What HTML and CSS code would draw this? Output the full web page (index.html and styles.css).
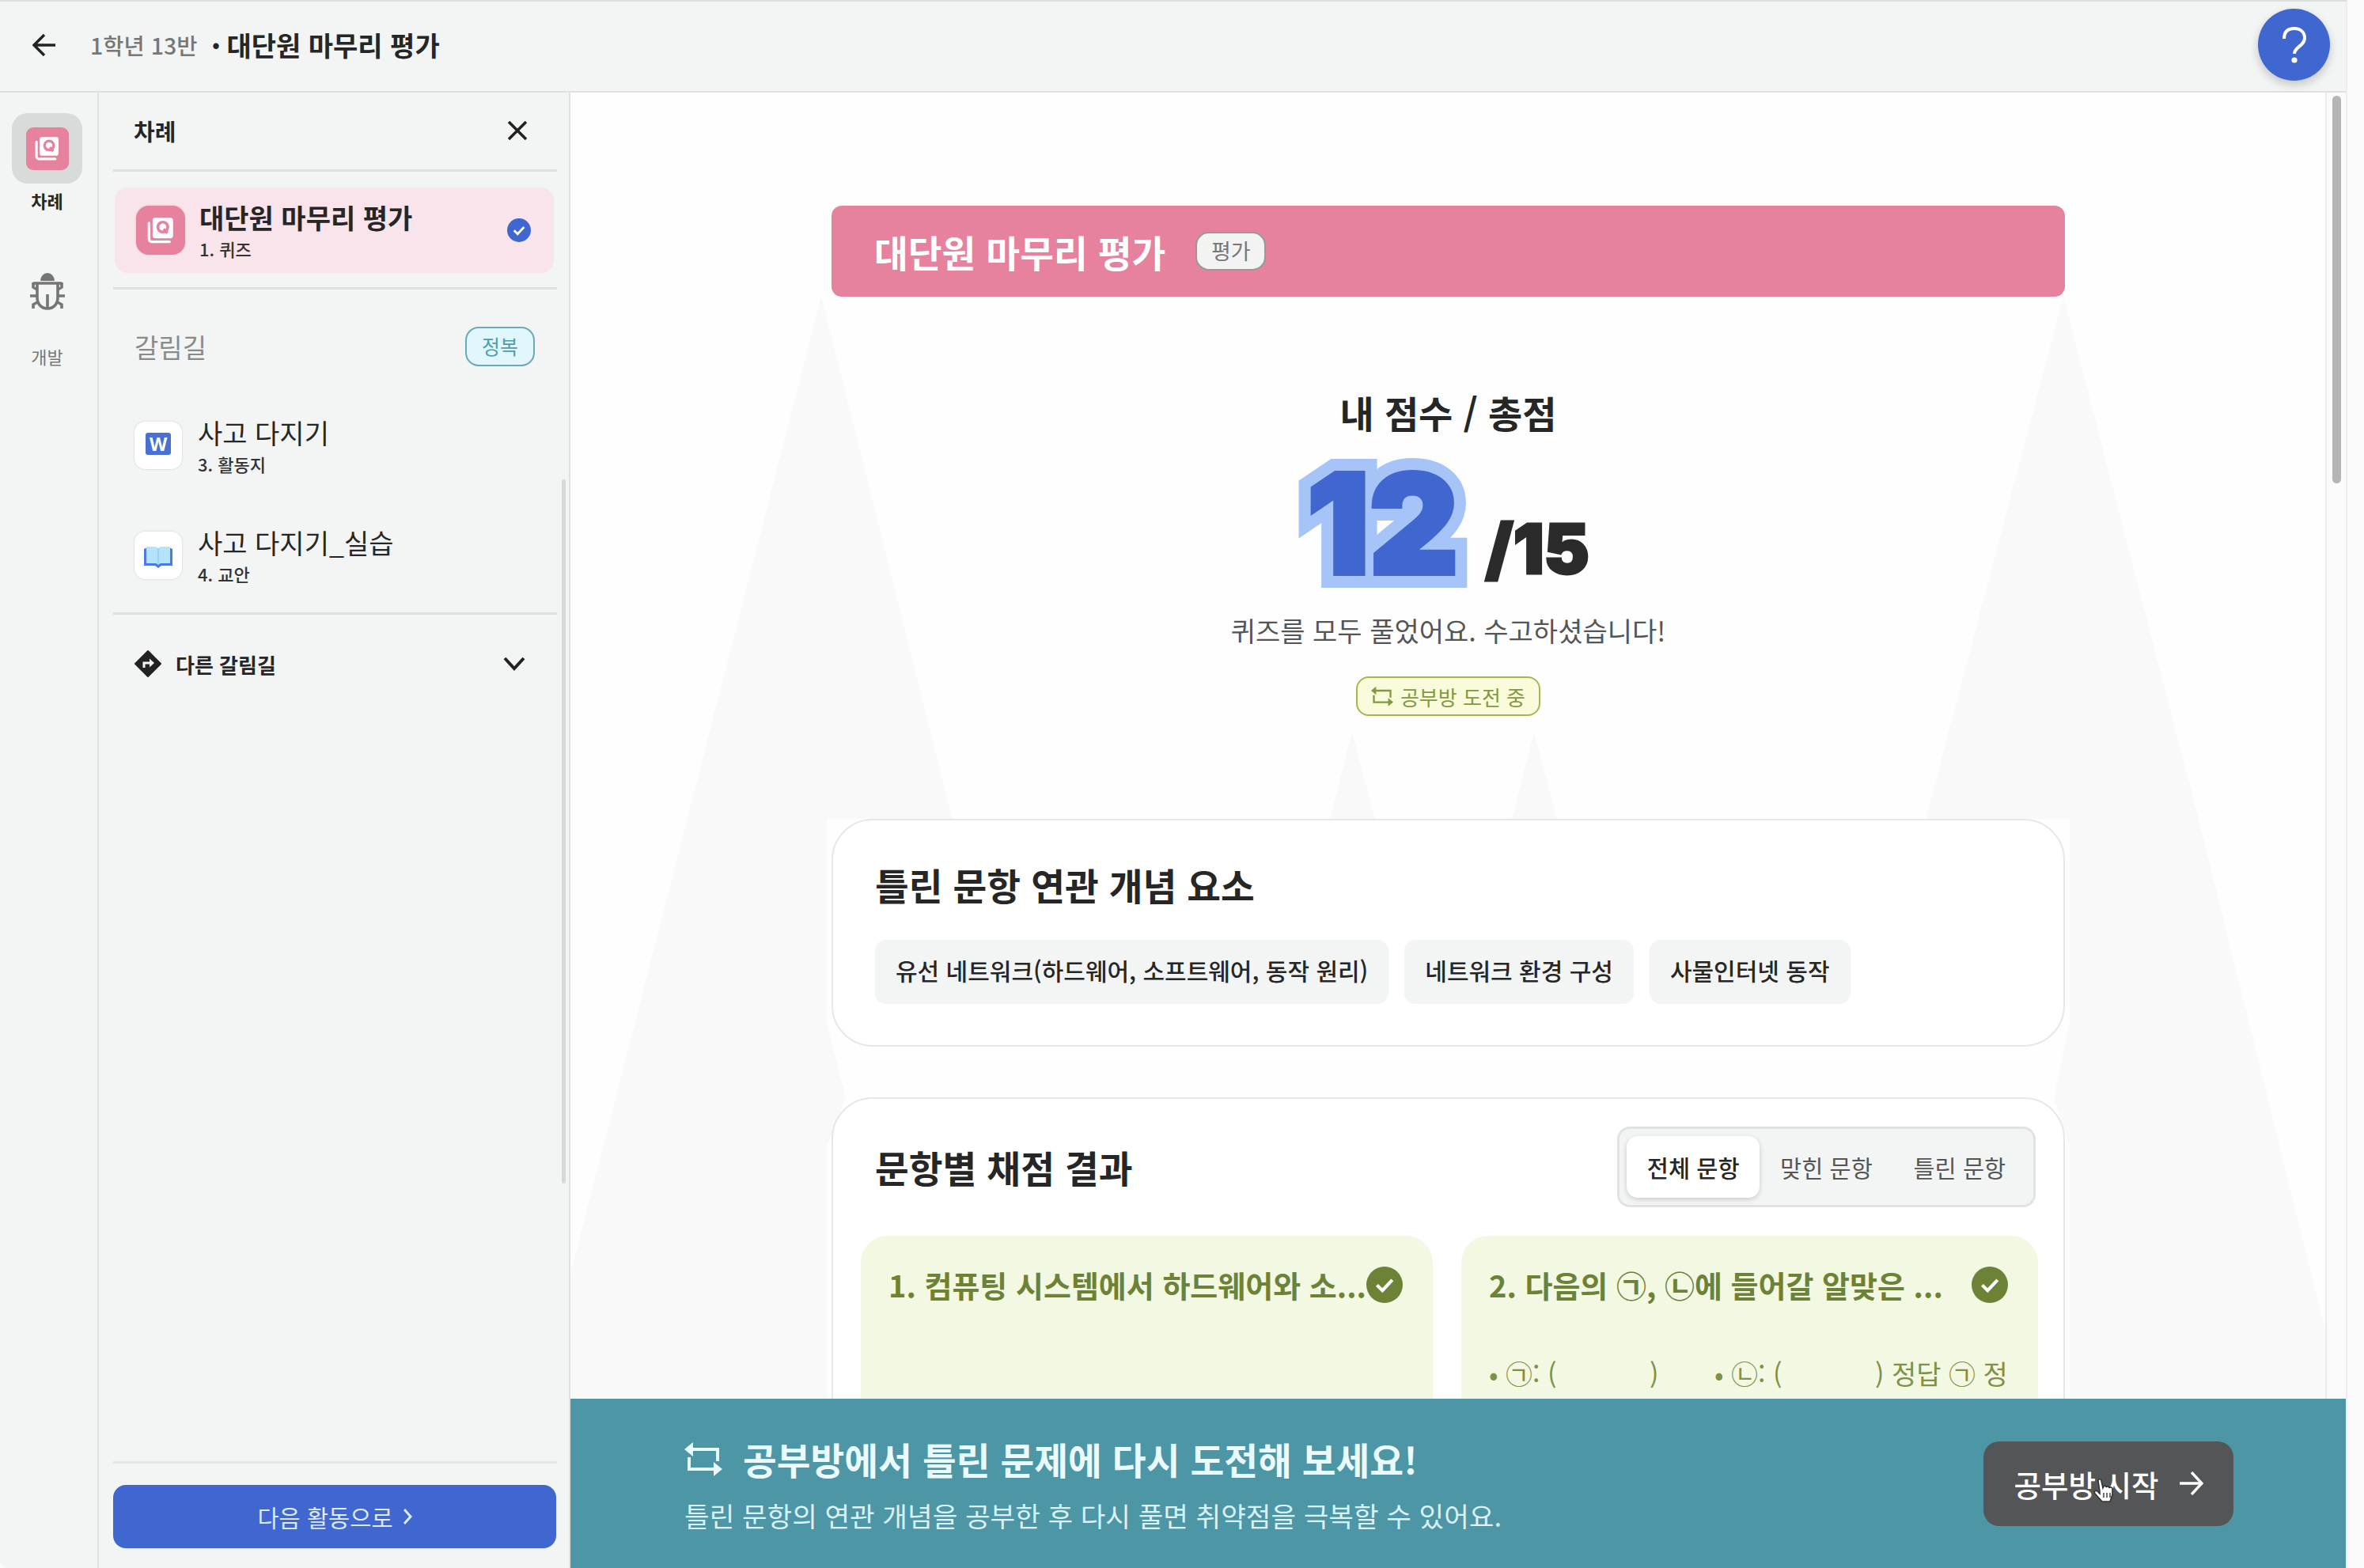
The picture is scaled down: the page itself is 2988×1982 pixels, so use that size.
FILE: index.html
```html
<!DOCTYPE html>
<html lang="ko">
  <head>
    <meta charset="utf-8" />
    <title>대단원 마무리 평가</title>
    <link rel="stylesheet" href="styles.css">
  </head>
  <body>
    <svg class="defs" width="0" height="0">
      <symbol id="quiz" viewBox="0 0 32 32">
        <path d="M3 8v18a3 3 0 0 0 3 3h20" fill="none" stroke="#fff" stroke-width="3" stroke-linecap="round"/>
        <rect x="7" y="2" width="23" height="23" rx="3" fill="#fff"/>
        <circle cx="18.5" cy="12.5" r="5.6" fill="none" stroke="#e6829d" stroke-width="3.2"/>
        <path d="M19.5 14.5l4 5" stroke="#e6829d" stroke-width="3.2"/>
      </symbol>
      <symbol id="check" viewBox="0 0 24 24">
        <circle cx="12" cy="12" r="12" fill="currentColor"/>
        <path d="M7 12.2l3.6 3.6 6.5-7" fill="none" stroke="#fff" stroke-width="2.2"/>
      </symbol>
      <symbol id="retry" viewBox="0 0 48 48">
        <path d="M5 12h37v15M43 37H6V22" fill="none" stroke="currentColor" stroke-width="4"/>
        <path d="M11 3v18L0 12zM37 28v18l11-9z" fill="currentColor"/>
      </symbol>
    </svg>

    <div class="app">
      <header class="topbar">
        <svg class="back" viewBox="0 0 30 30"><path d="M29 15H3M15 2L2 15l13 13"/></svg>
        <span class="class-name">1학년 13반</span>
        <span class="dot">·</span>
        <h1>대단원 마무리 평가</h1>
        <button class="help"><svg viewBox="0 0 30 46"><path d="M2 15C2 6 7 2 15 2s13 5 13 12c0 10-13 11-13 20"/><circle cx="15" cy="42" r="3.6"/></svg></button>
      </header>

      <div class="body">
        <nav class="rail">
          <div class="rail-icon active"><span class="quiz-tile"><svg><use href="#quiz"/></svg></span></div>
          <span class="rail-label active">차례</span>
          <div class="rail-icon bug">
            <svg viewBox="0 0 44 50">
              <path d="M13 12a9 10 0 0 1 18 0z" fill="#757575"/>
              <path d="M4 15h36M9 16v17c0 8 5 14 13 14s13-6 13-14V16M22 29v17M4 14v6l5 3M40 14v6l-5 3M0 31h9M35 31h9M4 47v-5l7-4M40 47v-5l-7-4" fill="none" stroke="#757575" stroke-width="3.6"/>
            </svg>
          </div>
          <span class="rail-label">개발</span>
        </nav>

        <aside class="toc">
          <div class="toc-head">
            <h2>차례</h2>
            <svg class="close" viewBox="0 0 24 24"><path d="M1 1l22 22M23 1L1 23"/></svg>
          </div>
          <div class="toc-item current">
            <span class="tile quiz-tile"><svg><use href="#quiz"/></svg></span>
            <div class="toc-text"><strong>대단원 마무리 평가</strong><small>1. 퀴즈</small></div>
            <svg class="done"><use href="#check"/></svg>
          </div>
          <div class="branch">
            <div class="branch-head"><span>갈림길</span><span class="badge-blue">정복</span></div>
            <div class="toc-item">
              <span class="tile"><span class="word">W</span></span>
              <div class="toc-text"><strong>사고 다지기</strong><small>3. 활동지</small></div>
            </div>
            <div class="toc-item">
              <span class="tile">
                <svg class="book" viewBox="0 0 38 30">
                  <path d="M1 5l4-2v20h28V3l4 2v21H23l-4 3-4-3H1z" fill="#4b7be0"/>
                  <path d="M4 2h12l3 2 3-2h12v21H22l-3 2-3-2H4z" fill="#b5e3fb"/>
                  <path d="M19 4v20" stroke="#8ccdf3" stroke-width="1.5"/>
                </svg>
              </span>
              <div class="toc-text"><strong>사고 다지기_실습</strong><small>4. 교안</small></div>
            </div>
          </div>
          <div class="other">
            <svg class="turn" viewBox="0 0 34 34"><path d="M17 1l16 16-16 16L1 17z" fill="#222" stroke="#222" stroke-width="2" stroke-linejoin="round"/><path d="M12 22v-6h8" fill="none" stroke="#f3f5f4" stroke-width="3"/><path d="M19 10.500l6 5.500-6 5.500z" fill="#f3f5f4"/></svg>
            <span>다른 갈림길</span>
            <svg class="chevron" viewBox="0 0 28 18"><path d="M2 2l12 13L26 2"/></svg>
          </div>
          <div class="toc-foot">
            <button class="next">다음 활동으로 <svg viewBox="0 0 12 20"><path d="M2 1l8 9-8 9"/></svg></button>
          </div>
          <div class="toc-scroll"></div>
        </aside>

        <main class="main">
          <!-- spotlight beams behind the result -->
          <svg class="beams" viewBox="721 117 2218 1651">
            <path d="M1038 374L1204 1035H1045V1290L1069 1387 1045 1450V1768H721V1610z"/>
            <path d="M2608 374L2434 1035H2616V1290L2596 1387 2616 1450V1768H2939V1680L2775 1020z"/>
            <path d="M1709 925L1738 1035H1681zM1939 925L1968 1035H1911z"/>
          </svg>

          <div class="content">
            <section class="banner">
              <h2>대단원 마무리 평가</h2>
              <span class="badge-white">평가</span>
            </section>

            <section class="score">
              <h3>내 점수 / 총점</h3>
              <div class="numbers">
                <span class="mine" data-score="12">12</span>
                <span class="total"><i>/</i>15</span>
              </div>
              <p>퀴즈를 모두 풀었어요. 수고하셨습니다!</p>
              <span class="badge-green"><svg><use href="#retry"/></svg>공부방 도전 중</span>
            </section>

            <section class="card concepts">
              <h2>틀린 문항 연관 개념 요소</h2>
              <div class="tags">
                <span>유선 네트워크(하드웨어, 소프트웨어, 동작 원리)</span>
                <span>네트워크 환경 구성</span>
                <span>사물인터넷 동작</span>
              </div>
            </section>

            <section class="card results">
              <div class="results-head">
                <h2>문항별 채점 결과</h2>
                <div class="tabs">
                  <button class="selected">전체 문항</button>
                  <button>맞힌 문항</button>
                  <button>틀린 문항</button>
                </div>
              </div>
              <div class="answers">
                <article class="answer">
                  <h4><span>1. 컴퓨팅 시스템에서 하드웨어와 소...</span><svg><use href="#check"/></svg></h4>
                </article>
                <article class="answer">
                  <h4><span>2. 다음의 ㉠, ㉡에 들어갈 알맞은 ...</span><svg><use href="#check"/></svg></h4>
                  <div class="blanks">
                    <span class="blank">• ㉠: (</span><span class="blank-end">)</span>
                    <span class="blank">• ㉡: (</span><span>) 정답 ㉠ 정</span>
                  </div>
                </article>
              </div>
            </section>
          </div>

          <div class="scrollbar"><div class="thumb"></div></div>

          <div class="study">
            <div class="study-text">
              <h2><svg><use href="#retry"/></svg>공부방에서 틀린 문제에 다시 도전해 보세요!</h2>
              <p>틀린 문항의 연관 개념을 공부한 후 다시 풀면 취약점을 극복할 수 있어요.</p>
            </div>
            <button class="start">
              공부방 시작
              <svg class="arrow" viewBox="0 0 30 30"><path d="M0 15h27M15 1l13 14-13 14"/></svg>
              <svg class="cursor" viewBox="0 0 28 32"><path d="M9 17L7 4c0-3 4-3 4 0l2 9 1-2c1-2 3-1 3 1 1-2 4-1 4 1 1-2 4-1 4 1v7l-3 9H12L3 20c-2-3 1-5 3-3l3 3z" fill="#fff" stroke="#333" stroke-width="1.600"/><path d="M14 19v6M18 19v6M22 19v6" stroke="#333" stroke-width="1.400"/></svg>
            </button>
          </div>
        </main>
      </div>
    </div>
  </body>
</html>
```
FILE: styles.css
```css
* {
  box-sizing: border-box;
}
body {
  margin: 0;
  background: #fafafa;
  color: #262626;
  font-family: "Noto Sans CJK KR", "Noto Sans", sans-serif;
}
h1, h2, h3, h4, p {
  margin: 0;
}
button {
  font-family: inherit;
  border: none;
  padding: 0;
}
.defs {
  position: absolute;
}
.app {
  width: 2967px;
  height: 1982px;
  overflow: hidden;
  background: #f3f5f4;
  border-top: 2px solid #dcdddd;
  border-right: 2px solid #ededed;
  border-bottom-left-radius: 10px;
}

/* Top bar */
.topbar {
  height: 115px;
  display: flex;
  align-items: center;
  padding: 0 20px 4px 41px;
  border-bottom: 2px solid #dfe1e0;
}
.back {
  width: 30px;
  height: 30px;
  margin-right: 43px;
  fill: none;
  stroke: #222;
  stroke-width: 3.4;
}
.class-name {
  font-size: 28.500px;
  font-weight: 500;
  color: #777;
}
.dot {
  width: 37px;
  text-align: center;
  font-size: 34px;
  font-weight: 900;
  padding-left: 10px;
}
.topbar h1 {
  font-size: 34px;
  font-weight: 700;
}
.help {
  width: 91px;
  height: 91px;
  margin-left: auto;
  border-radius: 50%;
  background: #4067cf;
  display: flex;
  align-items: center;
  justify-content: center;
  box-shadow: 0 5px 12px rgba(0,0,0,0.2);
}
.help svg {
  width: 30px;
  height: 46px;
  fill: none;
  stroke: #fff;
  stroke-width: 4;
}
.help circle {
  fill: #fff;
  stroke: none;
}
.body {
  display: flex;
  height: 1865px;
}

/* Icon rail */
.rail {
  width: 125px;
  border-right: 2px solid #e0e2e1;
  display: flex;
  flex-direction: column;
  align-items: center;
  padding: 26px 4px 0 0;
}
.rail-icon {
  width: 89px;
  height: 89px;
  border-radius: 20px;
  display: flex;
  align-items: center;
  justify-content: center;
}
.rail-icon.active {
  background: #d9dada;
}
.rail-icon .quiz-tile {
  width: 54px;
  height: 54px;
}
.quiz-tile {
  background: #e6829d;
  border-radius: 9px;
  display: flex;
  align-items: center;
  justify-content: center;
}
.quiz-tile svg {
  width: 33px;
  height: 33px;
}
.rail-label {
  height: 32px;
  line-height: 32px;
  margin-top: 5px;
  font-size: 22px;
  color: #777;
}
.rail-label.active {
  font-weight: 700;
  color: #262626;
}
.bug {
  margin-top: 54px;
  margin-bottom: 17px;
}
.bug svg {
  width: 46px;
  height: 50px;
}

/* Table of contents */
.toc {
  position: relative;
  width: 596px;
  border-right: 2px solid #e0e2e1;
  padding: 0 15px 0 18px;
  display: flex;
  flex-direction: column;
}
.toc-head {
  height: 100px;
  display: flex;
  align-items: center;
  justify-content: space-between;
  padding: 0 38px 2px 26px;
  border-bottom: 3px solid #dfe1e0;
}
.toc-head h2 {
  font-size: 29px;
}
.close {
  width: 24px;
  height: 24px;
  fill: none;
  stroke: #222;
  stroke-width: 3.600;
}
.toc-item {
  display: flex;
  align-items: center;
  height: 108px;
  padding: 0 29px 0 27px;
}
.toc-item.current {
  margin: 20px 4px 18px 2px;
  border-radius: 16px;
  background: #f9e4eb;
}
.tile {
  width: 60px;
  height: 60px;
  margin-right: 20px;
  border-radius: 14px;
  background: #fff;
  box-shadow: 0 0 3px rgba(0,0,0,0.15);
  display: flex;
  align-items: center;
  justify-content: center;
}
.tile.quiz-tile {
  width: 62px;
  height: 62px;
  margin-right: 18px;
  border-radius: 16px;
  background: #e6829d;
}
.tile.quiz-tile svg {
  width: 36px;
  height: 36px;
}
.toc-text {
  display: flex;
  flex-direction: column;
}
.toc-text strong {
  font-size: 34px;
  line-height: 46px;
  font-weight: 400;
}
.current .toc-text strong {
  font-weight: 700;
}
.toc-text small {
  font-size: 22px;
  line-height: 32px;
  font-weight: 500;
  color: #333;
}
.done {
  width: 30px;
  height: 30px;
  margin-left: auto;
  color: #4067cf;
}
.branch {
  height: 414px;
  border-top: 3px solid #dfe1e0;
  border-bottom: 3px solid #dfe1e0;
}
.branch-head {
  height: 143px;
  display: flex;
  align-items: center;
  justify-content: space-between;
  padding: 0 28px 0 27px;
  font-size: 33px;
  color: #8a8a8a;
}
.badge-blue {
  width: 88px;
  height: 50px;
  border: 2px solid #6ba9b9;
  border-radius: 17px;
  background: #e2f7fd;
  color: #4b9db3;
  font-size: 25px;
  line-height: 44px;
  text-align: center;
}
.branch .toc-item {
  height: 108px;
  margin-bottom: 31px;
}
.word {
  width: 32px;
  height: 28px;
  background: #4770d2;
  border-radius: 3px;
  color: #fff;
  font: 700 23px/28px "Noto Sans", sans-serif;
  text-align: center;
  margin-bottom: 5px;
}
.book {
  width: 38px;
  height: 30px;
  margin-top: 3px;
}
.other {
  height: 124px;
  display: flex;
  align-items: center;
  padding: 0 40px 0 27px;
  font-size: 26px;
  font-weight: 700;
}
.turn {
  width: 34px;
  height: 34px;
  margin-right: 18px;
}
.chevron {
  width: 28px;
  height: 18px;
  margin-left: auto;
  fill: none;
  stroke: #222;
  stroke-width: 4;
}
.toc-foot {
  margin-top: auto;
  height: 135px;
  border-top: 3px solid #e3e4e4;
  padding-top: 27px;
}
.next {
  width: 560px;
  height: 80px;
  border-radius: 16px;
  background: #4067cf;
  color: #dfe9ff;
  font-size: 29.500px;
  display: flex;
  align-items: center;
  justify-content: center;
  gap: 12px;
}
.next svg {
  width: 12px;
  height: 20px;
  fill: none;
  stroke: #dfe9ff;
  stroke-width: 3;
}
.toc-scroll {
  position: absolute;
  right: 4px;
  top: 489px;
  width: 5px;
  height: 890px;
  border-radius: 3px;
  background: #d7d9d8;
}

/* Result page */
.main {
  position: relative;
  width: 2244px;
  background: #fefefe;
  overflow: hidden;
}
.beams {
  position: absolute;
  left: 0;
  top: 0;
  width: 2218px;
  height: 1651px;
  fill: #f9f9f9;
}
.content {
  position: relative;
  width: 1559px;
  margin: 143px 0 0 330px;
}
.banner {
  height: 115px;
  border-radius: 13px;
  background: #e6829d;
  display: flex;
  align-items: center;
  padding: 0 54px;
  gap: 38px;
  color: #fff;
}
.banner h2 {
  font-size: 46.500px;
}
.badge-white {
  width: 89px;
  height: 49px;
  border: 2px solid #999;
  border-radius: 17px;
  background: #f3f3f3;
  color: #777;
  font-size: 27px;
  line-height: 43px;
  text-align: center;
}
.score {
  height: 660px;
  padding-top: 111px;
  display: flex;
  flex-direction: column;
  align-items: center;
}
.score h3 {
  font-size: 47px;
  line-height: 70px;
}
.numbers {
  height: 181px;
  margin-top: 15px;
  display: flex;
  align-items: baseline;
  font-family: Inter, sans-serif;
  font-weight: 900;
  line-height: 181px;
}
.mine {
  position: relative;
  z-index: 0;
  margin-right: 34px;
  font-size: 174px;
  color: #4067cf;
  -webkit-text-stroke: 6px #4067cf;
}
.mine::before {
  content: attr(data-score);
  position: absolute;
  left: 0;
  top: 0;
  z-index: -1;
  color: #a6c4f8;
  -webkit-text-stroke: 36px #a6c4f8;
  stroke-linejoin: round;
}
.total {
  font-size: 86px;
  color: #2b2b2b;
  -webkit-text-stroke: 3px #2b2b2b;
}
.total i {
  font-style: normal;
}
.score p {
  margin-top: 20px;
  font-size: 34px;
  line-height: 50px;
  color: #555;
}
.badge-green {
  width: 233px;
  height: 50px;
  margin-top: 33px;
  border: 2px solid #a5b750;
  border-radius: 16px;
  background: #f9fbda;
  color: #84983f;
  font-size: 26px;
  display: flex;
  align-items: center;
  justify-content: center;
  gap: 9px;
}
.badge-green svg {
  width: 28px;
  height: 28px;
}
.card {
  border: 2px solid #e6e7e7;
  border-radius: 52px;
  background: #fff;
}
.card h2 {
  font-size: 46.500px;
  line-height: 68px;
}
.concepts {
  height: 288px;
  padding: 47px 53px 0;
}
.tags {
  display: flex;
  gap: 20px;
  margin-top: 36px;
}
.tags span {
  height: 81px;
  padding: 0 26px;
  border-radius: 14px;
  background: #f3f5f5;
  font-size: 30px;
  line-height: 77px;
  font-weight: 500;
}
.results {
  height: 700px;
  margin-top: 64px;
  padding: 35px 35px 0;
}
.results-head {
  display: flex;
  align-items: center;
  justify-content: space-between;
  padding-left: 18px;
}
.tabs {
  display: flex;
  width: 529px;
  height: 102px;
  padding: 9px;
  border: 3px solid #e0e3e2;
  border-radius: 16px;
  background: #f3f5f5;
}
.tabs button {
  flex: 1;
  background: none;
  color: #555;
  font-size: 29.500px;
}
.tabs .selected {
  background: #fff;
  border-radius: 14px;
  box-shadow: 0 2px 6px rgba(0,0,0,0.18);
  color: #262626;
  font-weight: 500;
}
.answers {
  display: grid;
  grid-template-columns: 1fr 1fr;
  gap: 36px;
  margin-top: 36px;
}
.answer {
  height: 500px;
  padding: 32px 38px 0 35px;
  border-radius: 34px;
  background: #f2f8e2;
  color: #6c8236;
}
.answer h4 {
  display: flex;
  align-items: center;
  justify-content: space-between;
  font-size: 38px;
  line-height: 60px;
  white-space: nowrap;
}
.answer h4 svg {
  width: 46px;
  height: 46px;
}
.blanks {
  display: flex;
  margin-top: 52px;
  font-size: 34px;
  line-height: 60px;
  color: #7d9147;
  white-space: nowrap;
}
.blank {
  width: 203px;
}
.blank-end {
  width: 82px;
}

/* Page scrollbar */
.scrollbar {
  position: absolute;
  right: 0;
  top: 0;
  width: 26px;
  height: 1651px;
  padding: 4px 6px 0 7px;
  border-left: 2px solid #ebebeb;
  background: #fafafa;
}
.thumb {
  height: 490px;
  border-radius: 7px;
  background: #b5b5b5;
}

/* Study room call to action */
.study {
  position: absolute;
  left: 0;
  right: 0;
  bottom: 0;
  height: 214px;
  padding: 0 142px 0 144px;
  background: #4c96a5;
  display: flex;
  align-items: center;
  justify-content: space-between;
}
.study-text h2 {
  display: flex;
  align-items: center;
  gap: 26px;
  font-size: 46.500px;
  line-height: 68px;
  color: #eafaff;
}
.study-text h2 svg {
  width: 48px;
  height: 48px;
}
.study-text p {
  margin-top: 11px;
  font-size: 34.400px;
  line-height: 52px;
  color: #d9f1f7;
}
.start {
  position: relative;
  width: 316px;
  height: 107px;
  border-radius: 20px;
  background: #545557;
  color: #fff;
  font-size: 37.500px;
  font-weight: 500;
  display: flex;
  align-items: center;
  justify-content: center;
  gap: 26px;
}
.arrow {
  width: 30px;
  height: 30px;
  fill: none;
  stroke: #fff;
  stroke-width: 3.400;
}
.cursor {
  position: absolute;
  left: 138px;
  top: 46px;
  width: 28px;
  height: 32px;
}
```
